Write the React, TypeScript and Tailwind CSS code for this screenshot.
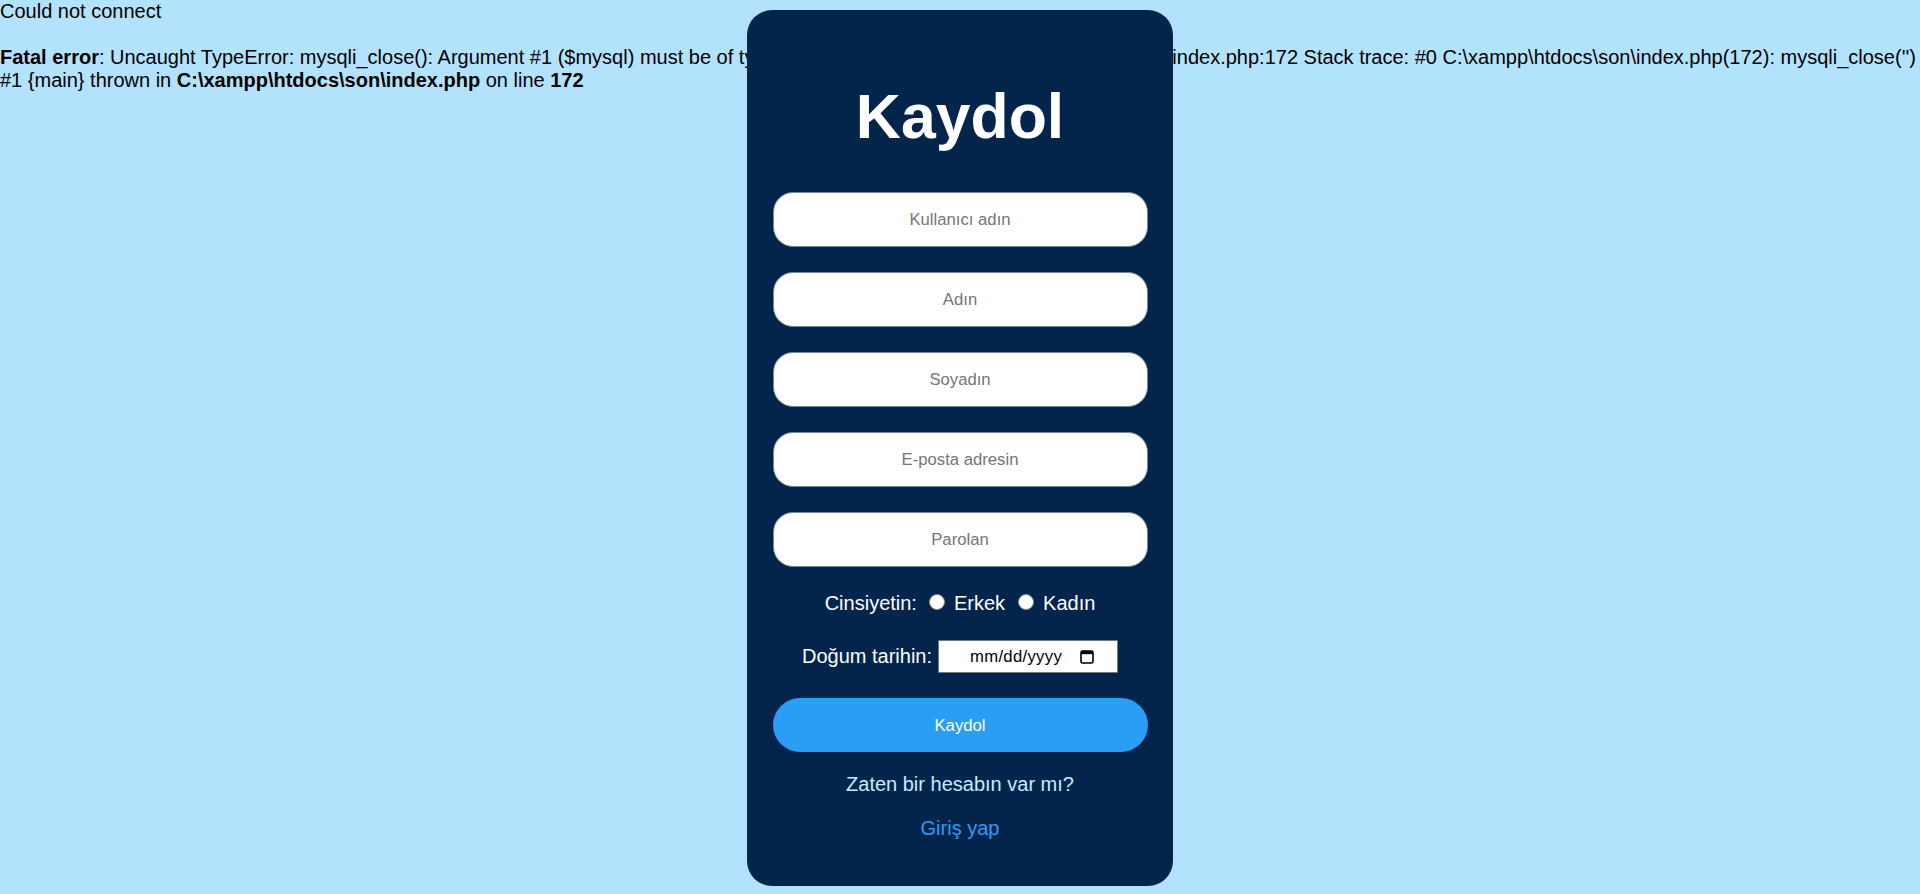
import React from "react";

function CalendarIcon() {
  return (
    <svg width="14" height="15" viewBox="0 0 14 15" aria-hidden="true">
      <rect x="1" y="2" width="12" height="12" rx="1.6" fill="none" stroke="#000" strokeWidth="1.6" />
      <rect x="1" y="2" width="12" height="3.2" fill="#000" />
    </svg>
  );
}

function Radio() {
  return <span className="inline-block w-[16px] h-[16px] rounded-full bg-white border border-[#8d8d8d] shrink-0" />;
}

export default function App() {
  const fields = ["Kullanıcı adın", "Adın", "Soyadın", "E-posta adresin", "Parolan"];
  return (
    <div className="relative min-h-[894px] bg-[#b3e3fc] font-['Liberation_Sans',Arial,sans-serif] text-[20px] leading-[23px] text-black">
      <div>
        Could not connect
        <br />
        <br />
        <b>Fatal error</b>: Uncaught TypeError: mysqli_close(): Argument #1 ($mysql) must be of type mysqli, string given in C:\xampp\htdocs\son\index.php:172 Stack trace: #0 C:\xampp\htdocs\son\index.php(172): mysqli_close('') #1 {"{main}"} thrown in <b>C:\xampp\htdocs\son\index.php</b> on line <b>172</b>
      </div>

      <div className="absolute left-1/2 top-[10px] -translate-x-1/2 w-[426px] bg-[#03254c] rounded-[25px] pt-[71px] pb-[46px] px-[25px] flex flex-col items-center">
        <h1 className="text-white font-bold text-[62.5px] leading-[70px]">Kaydol</h1>

        <div className="mt-[41px] w-[375px] flex flex-col gap-[25px]">
          {fields.map((f) => (
            <input
              key={f}
              type="text"
              placeholder={f}
              className="w-full h-[55px] rounded-[20px] bg-white border border-[#7a8699] text-center text-[16.7px] text-black placeholder:text-[#757575] outline-none"
            />
          ))}
        </div>

        <div className="mt-[25px] h-[23px] flex items-center text-white">
          <span>Cinsiyetin:</span>
          <span className="ml-[12px]"><Radio /></span>
          <span className="ml-[9px]">Erkek</span>
          <span className="ml-[13px]"><Radio /></span>
          <span className="ml-[9px]">Kadın</span>
        </div>

        <div className="mt-[25px] h-[33px] flex items-center text-white">
          <span>Doğum tarihin:</span>
          <div className="ml-[6px] w-[180px] h-[33px] bg-white border border-[#767676] flex items-center justify-between pl-[31px] pr-[23px] text-black text-[16.7px]">
            <span className="tracking-[0.3px]">mm/dd/yyyy</span>
            <CalendarIcon />
          </div>
        </div>

        <button className="mt-[25px] w-[375px] h-[54px] rounded-full bg-[#2a9df4] text-white text-[16.7px]">
          Kaydol
        </button>

        <p className="mt-[21px] text-[#c8eafd]">Zaten bir hesabın var mı?</p>
        <a className="mt-[21px] text-[#2a9df4]" href="#">
          Giriş yap
        </a>
      </div>
    </div>
  );
}
